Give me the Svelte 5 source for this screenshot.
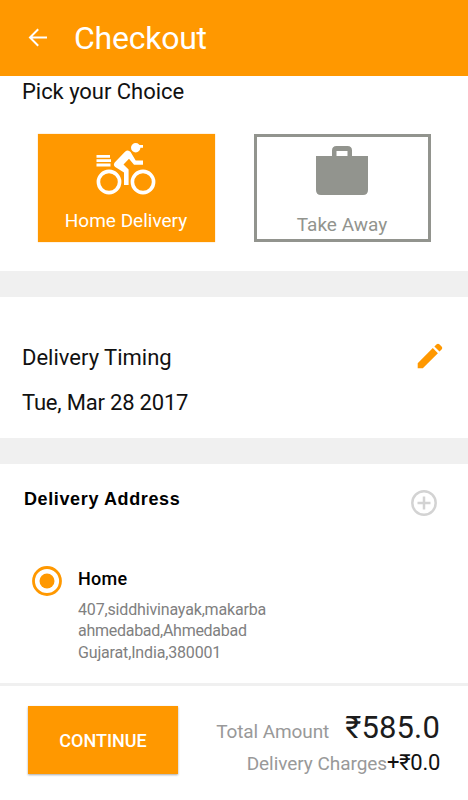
<script>
  const address = ['407,siddhivinayak,makarba', 'ahmedabad,Ahmedabad', 'Gujarat,India,380001'];
</script>

<div class="screen">
  <header>
    <svg class="back" width="20" height="20" viewBox="0 0 20 20" fill="none" stroke="#fff" stroke-width="2">
      <path d="M19 9.500H2.500M10.200 1.300L2 9.500l8.200 8.200" />
    </svg>
    <h1>Checkout</h1>
  </header>

  <section class="choice">
    <h2 class="pick">Pick your Choice</h2>
    <div class="cards">
      <button class="card on">
        <svg width="60" height="54" viewBox="0 0 60 54" fill="#fff">
          <g fill="none" stroke="#fff" stroke-width="3.6">
            <circle cx="13" cy="40" r="10.6" />
            <circle cx="47" cy="40" r="10.6" />
          </g>
          <path d="M.5 13H14v2.800H.5zM.5 17.300H15v2.800H.5zM.5 21.600H14.500v2.800H.5z" />
          <circle cx="39.700" cy="5.700" r="4.700" />
          <path d="M39 3h8v2.800h-7z" />
          <path d="M18.700 20.500L29 9.800q3-2.800 5.600.3L39.700 18.500H47v4.200H38L33 16.800l-5.500 5.600 5.100 5.100V43H28V30.400l-8.800-5.300q-2.400-2.200-.5-4.600z" />
        </svg>
        <span class="t-home">Home Delivery</span>
      </button>
      <button class="card off">
        <svg width="52" height="49" viewBox="0 0 52 49" fill="#92948e">
          <path fill-rule="evenodd" d="M0 10H16V4.500q0-4.500 4.500-4.500h11Q36 0 36 4.500V10H52V44q0 5-5 5H5q-5 0-5-5zM20.500 5V10h11V5z" />
        </svg>
        <span class="t-take">Take Away</span>
      </button>
    </div>
  </section>

  <section class="timing">
    <div class="lines">
      <h2 class="dt">Delivery Timing</h2>
      <p class="date">Tue, Mar 28 2017</p>
    </div>
    <svg class="pencil" width="26" height="26" viewBox="0 0 26 26" fill="#ff9800">
      <path d="M.7 20.200L15.800 5.100l5.100 5.100L5.800 25.300H.7zM17.400 3.500L19.700 1.200q1.300-1 2.600 0l2.500 2.500q1 1.300 0 2.600L22.500 8.600z" />
    </svg>
  </section>

  <section class="address">
    <div class="row">
      <h2 class="da">Delivery Address</h2>
      <svg width="26" height="26" viewBox="0 0 26 26" fill="none" stroke="#d3d3d3" stroke-width="2.500">
        <circle cx="13" cy="13" r="11.700" />
        <path d="M13 6.500v13M6.500 13h13" />
      </svg>
    </div>
    <div class="entry">
      <svg width="30" height="30" viewBox="0 0 30 30">
        <circle cx="15" cy="15" r="13.500" fill="none" stroke="#ff9800" stroke-width="2.800" />
        <circle cx="15" cy="15" r="7.500" fill="#ff9800" />
      </svg>
      <div>
        <h3>Home</h3>
        {#each address as line, i}
          <p class="line l{i}">{line}</p>
        {/each}
      </div>
    </div>
  </section>

  <footer>
    <button class="continue"><span>CONTINUE</span></button>
    <div class="totals">
      <div class="total"><span class="ta">Total Amount</span><strong>₹585.0</strong></div>
      <div class="charges"><span class="dc">Delivery Charges</span><b>+₹0.0</b></div>
    </div>
  </footer>
</div>

<style>
  :global(body) { margin: 0; background: #fff; }
  .screen {
    width: 468px; height: 800px; overflow: hidden; background: #fff; color: #111;
    display: flex; flex-direction: column; font-family: Roboto, sans-serif;
  }
  h1, h2, h3, p { margin: 0; font-weight: 400; white-space: nowrap; }
  button { border: 0; padding: 0; margin: 0; font: inherit; }
  svg { display: block; flex: none; }
  header, section, footer { box-sizing: border-box; flex: none; }
  header { height: 76px; background: #ff9800; display: flex; align-items: center; padding-left: 28px; color: #fff; }
  h1 { font-size: 32px; line-height: 40px; margin-left: 26px; letter-spacing: -.25px; }
  .choice { height: 221px; border-bottom: 26px solid #f0f0f0; }
  h2 { font-size: 22px; line-height: 30px; }
  .pick { padding: 1px 0 0 22px; letter-spacing: -.04px; }
  .cards { display: flex; gap: 39px; padding: 27px 0 0 37.500px; }
  .card {
    box-sizing: border-box; width: 177px; height: 108px; display: flex; flex-direction: column;
    align-items: center; font-size: 19px; line-height: 24px; white-space: nowrap;
  }
  .on { background: #ff9800; color: #fff; padding-top: 8px; box-shadow: 0 0 1px #ffb95a; }
  .on span { margin-top: 13px; }
  .off { background: #fff; border: 3px solid #92948e; color: #92948e; padding-top: 9px; }
  .off span { margin-top: 18px; }
  .timing { height: 167px; border-bottom: 26px solid #f0f0f0; display: flex; justify-content: space-between; padding: 46px 25px 0 22px; }
  .date { font-size: 22px; line-height: 30px; margin-top: 15px; letter-spacing: -.2px; }
  .address { height: 222px; border-bottom: 3px solid #f0f0f0; }
  .row { display: flex; justify-content: space-between; align-items: flex-start; padding: 26px 31px 0 24px; }
  .da { font: 700 18px/18px "Liberation Sans", sans-serif; color: #000; letter-spacing: .62px; }
  .entry { display: flex; gap: 16px; padding: 50px 0 0 32px; }
  h3 { font-size: 18px; font-weight: 500; line-height: 26px; color: #000; letter-spacing: .3px; }
  .line { font-size: 16px; line-height: 21.300px; color: #808080; letter-spacing: -.16px; }
  .l0 { margin-top: 7px; }
  .l1 { letter-spacing: -.27px; }
  .entry svg { margin-top: -.5px; }
  footer { height: 114px; display: flex; justify-content: space-between; padding: 20px 28px 0 28px; }
  .continue {
    width: 150px; height: 68px; background: #ff9800; color: #fff; font-weight: 500; font-size: 18px;
    line-height: 24px; padding-top: 2px; box-shadow: 0 1px 2px rgba(0, 0, 0, .35);
  }
  .totals { display: flex; flex-direction: column; align-items: flex-end; color: #999; white-space: nowrap; padding-top: 1px; }
  .total, .charges { display: flex; align-items: baseline; font-size: 19px; }
  .total { line-height: 42px; gap: 16px; }
  .ta { letter-spacing: -.1px; }
  .dc { letter-spacing: -.05px; }
  strong { font-weight: 400; font-size: 31px; color: #1c1c1c; letter-spacing: .15px; }
  .charges { line-height: 30px; margin-top: -5px; }
  b { font-weight: 400; font-size: 22px; color: #111; letter-spacing: -.3px; }
</style>
